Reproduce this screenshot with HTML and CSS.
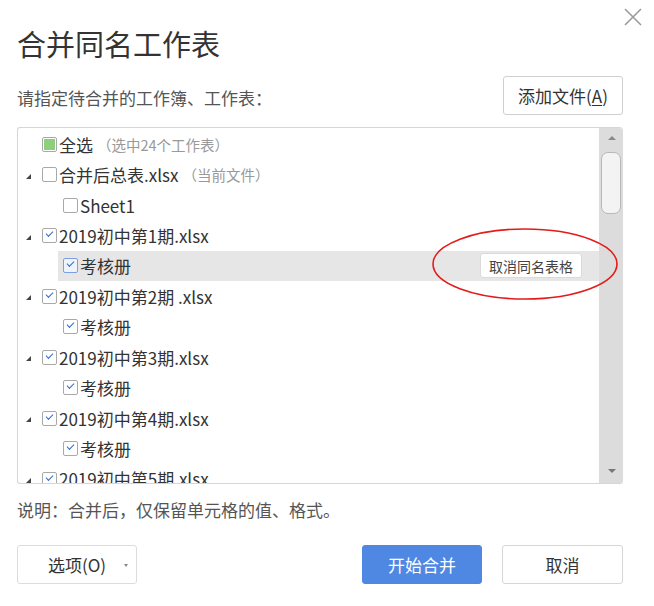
FILE: index.html
```html
<!DOCTYPE html>
<html lang="zh-CN">
<head>
    <meta charset="UTF-8">
    <title>合并同名工作表</title>
    <link rel="stylesheet" href="styles.css">
</head>
<body>

<div class="dialog">
    <span class="close">
        <svg width="18" height="18" viewBox="0 0 18 18"><path d="M1 1L17 17M17 1L1 17" stroke="#9a9a9a" stroke-width="1.6" fill="none"/></svg>
    </span>

    <div class="title">合并同名工作表</div>

    <div class="toolbar">
        <div class="hint">请指定待合并的工作簿、工作表：</div>
        <button class="btn btn-add">添加文件(<u>A</u>)</button>
    </div>

    <div class="list-box">
        <div class="rows">
            <div class="row lvl0 no-arrow">
                <span class="cb cb-part"></span><span class="label">全选</span><span class="note">（选中24个工作表）</span>
            </div>
            <div class="row lvl0">
                <span class="arrow"></span><span class="cb"></span><span class="label">合并后总表.xlsx</span><span class="note">（当前文件）</span>
            </div>
            <div class="row lvl1">
                <div class="row-inner"><span class="cb"></span><span class="label">Sheet1</span></div>
            </div>
            <div class="row lvl0">
                <span class="arrow"></span><span class="cb cb-on"></span><span class="label">2019初中第1期.xlsx</span>
            </div>
            <div class="row lvl1">
                <div class="row-inner active"><span class="cb cb-on cb-focus"></span><span class="label">考核册</span>
                    <button class="btn-cancel-same">取消同名表格</button>
                </div>
            </div>
            <div class="row lvl0">
                <span class="arrow"></span><span class="cb cb-on"></span><span class="label">2019初中第2期 .xlsx</span>
            </div>
            <div class="row lvl1">
                <div class="row-inner"><span class="cb cb-on"></span><span class="label">考核册</span></div>
            </div>
            <div class="row lvl0">
                <span class="arrow"></span><span class="cb cb-on"></span><span class="label">2019初中第3期.xlsx</span>
            </div>
            <div class="row lvl1">
                <div class="row-inner"><span class="cb cb-on"></span><span class="label">考核册</span></div>
            </div>
            <div class="row lvl0">
                <span class="arrow"></span><span class="cb cb-on"></span><span class="label">2019初中第4期.xlsx</span>
            </div>
            <div class="row lvl1">
                <div class="row-inner"><span class="cb cb-on"></span><span class="label">考核册</span></div>
            </div>
            <div class="row lvl0 last">
                <span class="arrow"></span><span class="cb cb-on"></span><span class="label">2019初中第5期.xlsx</span>
            </div>
        </div>
        <div class="scrollbar">
            <span class="sb-up"></span>
            <span class="sb-thumb"></span>
            <span class="sb-down"></span>
        </div>
    </div>

    <div class="footnote">说明：合并后，仅保留单元格的值、格式。</div>

    <div class="footer">
        <button class="btn btn-options">选项(O)<span class="caret"></span></button>
        <div class="footer-right">
            <button class="btn btn-primary">开始合并</button>
            <button class="btn btn-cancel">取消</button>
        </div>
    </div>

    <!-- marca vermelha por cima da lista -->
    <svg class="mark" width="200" height="80" viewBox="0 0 200 80">
        <ellipse cx="100" cy="38" rx="92" ry="35" fill="none" stroke="#e31b1b" stroke-width="1.6"/>
    </svg>
</div>

</body>
</html>
```

FILE: styles.css
```css
body {
    margin: 0;
    background-color: #fff;
    font-family: "Noto Sans CJK SC", "Noto Sans", sans-serif;
    color: #333;
}
.dialog {
    position: relative;
    width: 654px;
    height: 606px;
    padding: 26px 31px 0 17px;
    box-sizing: border-box;
}
.close {
    position: absolute;
    top: 7px;
    left: 624px;
    width: 18px;
    height: 18px;
}
.title {
    font-size: 29px;
    line-height: 35px;
    color: #333;
}
.toolbar {
    display: flex;
    justify-content: space-between;
    align-items: center;
    margin-top: 15px;
    height: 39px;
}
.hint {
    font-size: 17px;
    color: #555;
    margin-top: 3px;
}
.btn {
    font-family: inherit;
    font-size: 17px;
    color: #333;
    background-color: #fff;
    border: 1px solid #cfcfcf;
    border-radius: 3px;
    height: 39px;
    padding: 0;
    cursor: pointer;
}
.btn-add {
    width: 120px;
}
.btn-add u {
    text-underline-offset: 2px;
}
.list-box {
    display: flex;
    margin-top: 12px;
    height: 357px;
    border: 1px solid #d6d6d6;
    border-right: none;
    border-radius: 3px 4px 3px 3px;
    box-sizing: border-box;
    overflow: hidden;
}
.rows {
    flex: 1;
    padding-top: 1px;
    overflow: hidden;
}
.row {
    display: flex;
    align-items: center;
    height: 30.45px;
    font-size: 17px;
    white-space: nowrap;
}
.row.last {
    height: 24px;
    overflow: hidden;
    align-items: flex-start;
    padding-top: 3px;
    line-height: 24px;
}
.row.last .arrow {
    margin-top: 11px;
}
.row.last .cb {
    margin-top: 5px;
}
.lvl0 {
    padding-left: 7px;
}
.lvl0.no-arrow {
    padding-left: 24px;
}
.lvl1 {
    padding-left: 40px;
}
.row-inner {
    display: flex;
    align-items: center;
    flex: 1;
    height: 30px;
    padding-left: 5px;
}
.row-inner.active {
    background-color: #e6e6e6;
}
.arrow {
    width: 0;
    height: 0;
    border-left: 5px solid transparent;
    border-bottom: 5px solid #444;
    margin: 3px 11px 0 1px;
}
.cb {
    position: relative;
    width: 13px;
    height: 13px;
    border: 1px solid #a9a9a9;
    border-radius: 2px;
    background-color: #fff;
    margin-right: 2px;
    flex-shrink: 0;
}
.cb-part::after {
    content: "";
    position: absolute;
    left: 1px;
    top: 1px;
    width: 11px;
    height: 11px;
    background-color: #8ecf7e;
}
.cb-on::after {
    content: "";
    position: absolute;
    left: 3px;
    top: 2px;
    width: 6px;
    height: 3px;
    border-left: 1.6px solid #2f6ad0;
    border-bottom: 1.6px solid #2f6ad0;
    transform: rotate(-45deg);
}
.cb-focus {
    border-color: #7c9ee2;
    background-color: #eef3fc;
}
.label {
    color: #333;
}
.note {
    font-size: 14.5px;
    color: #999;
    margin-left: 4px;
}
.btn-cancel-same {
    margin-left: auto;
    margin-right: 17px;
    height: 25px;
    padding: 0 8px;
    font-family: inherit;
    font-size: 14px;
    color: #444;
    background-color: #fff;
    border: 1px solid #dadada;
    border-radius: 3px;
}
.scrollbar {
    position: relative;
    width: 24px;
    background-color: #dcdcdc;
}
.sb-up, .sb-down {
    position: absolute;
    left: 9px;
    width: 0;
    height: 0;
    border-left: 4px solid transparent;
    border-right: 4px solid transparent;
}
.sb-up {
    top: 8px;
    border-bottom: 4px solid #888;
}
.sb-down {
    bottom: 10px;
    border-top: 4px solid #777;
}
.sb-thumb {
    position: absolute;
    left: 2px;
    top: 24px;
    width: 18px;
    height: 60px;
    background-color: #f3f3f3;
    border: 1px solid #b8b8b8;
    border-radius: 7px;
}
.footnote {
    margin-top: 14px;
    font-size: 17px;
    line-height: 24px;
    color: #555;
}
.footer {
    display: flex;
    justify-content: space-between;
    margin-top: 23px;
}
.footer-right {
    display: flex;
    gap: 20px;
}
.btn-options {
    position: relative;
    width: 120px;
    text-align: left;
    padding-left: 30px;
    border-color: #dcdcdc;
}
.caret {
    position: absolute;
    right: 8px;
    top: 18px;
    width: 0;
    height: 0;
    border-left: 2.5px solid transparent;
    border-right: 2.5px solid transparent;
    border-top: 3px solid #888;
}
.btn-primary {
    width: 120px;
    color: #fff;
    background-color: #4e88e2;
    border-color: #4e88e2;
}
.btn-cancel {
    width: 121px;
    border-color: #d6d6d6;
}
.mark {
    position: absolute;
    left: 425px;
    top: 226px;
}
```
